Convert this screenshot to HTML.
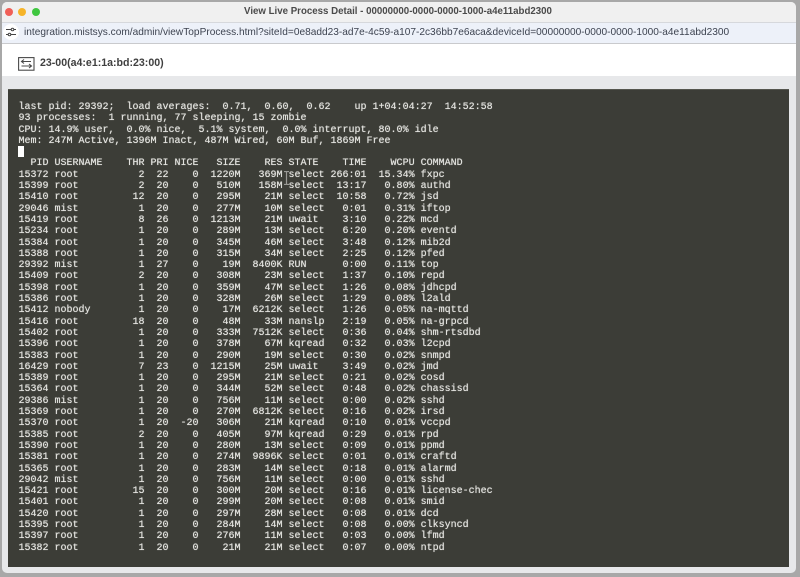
<!DOCTYPE html>
<html><head><meta charset="utf-8"><style>
html,body{margin:0;padding:0;width:800px;height:577px;overflow:hidden;background:#a8a8a8}
body{position:relative;font-family:"Liberation Sans",sans-serif}
.a{position:absolute}
#win{left:2px;top:2px;width:794px;height:571px;background:#e7e8ea;border-radius:5px;overflow:hidden}
#tb{left:2px;top:2px;width:794px;height:20px;background:#f0f0f0;border-radius:5px 5px 0 0}
#addr{left:2px;top:22px;width:794px;height:20px;background:#edf1f9;border-top:1px solid #d6d8dc;border-bottom:2px solid #c9cacd}
#wh{left:2px;top:44px;width:794px;height:32px;background:#fff}
.dot{width:8.4px;height:8.4px;border-radius:50%;top:7.8px}
#title{left:0;top:6px;width:796px;text-align:center;font-size:9.7px;line-height:12px;font-weight:bold;color:#4a4a4a;white-space:nowrap;filter:blur(.25px)}
#url{left:24px;top:26px;font-size:10.13px;line-height:14px;color:#3d4350;white-space:nowrap;filter:blur(.2px)}
#name{left:40px;top:56px;font-size:10.6px;line-height:14px;font-weight:bold;color:#3f3f3f;white-space:nowrap;filter:blur(.2px)}
#term{left:8px;top:89px;width:781px;height:478px;background:#3c3d37;border-top:1px solid #55564f;box-sizing:border-box}
pre{position:absolute;left:18.5px;top:102px;margin:0;font-family:"Liberation Mono",monospace;font-size:10px;line-height:11.3px;color:#e4e4e0;font-weight:normal;white-space:pre;text-shadow:0 0 .6px #e4e4e0;filter:blur(.25px)}
#cur{left:18px;top:146px;width:6px;height:11px;background:#fff}
</style></head><body>
<div class="a" id="win"></div>
<div class="a" id="tb"></div>
<div class="a dot" style="left:5px;background:#f05f57"></div>
<div class="a dot" style="left:18px;background:#f6b429"></div>
<div class="a dot" style="left:31.5px;background:#3fc63f"></div>
<div class="a" id="title">View Live Process Detail - 00000000-0000-0000-1000-a4e11abd2300</div>
<div class="a" id="addr"></div>
<div class="a" style="left:3px;top:24px;width:16px;height:16px;border-radius:50%;background:#fff"></div>
<svg class="a" style="left:6px;top:27px" width="10" height="10" viewBox="0 0 10 10" fill="none" stroke="#444" stroke-width="1"><path d="M0 2.5H5M8 2.5H10M0 7.5H2M5 7.5H10"/><circle cx="6.5" cy="2.5" r="1.3"/><circle cx="3.5" cy="7.5" r="1.3"/></svg>
<div class="a" id="url">integration.mistsys.com/admin/viewTopProcess.html?siteId=0e8add23-ad7e-4c59-a107-2c36bb7e6aca&amp;deviceId=00000000-0000-0000-1000-a4e11abd2300</div>
<div class="a" id="wh"></div>
<svg class="a" style="left:18px;top:57px" width="17" height="14" viewBox="0 0 17 14" fill="none" stroke="#4a4a4a" stroke-width="1.1"><rect x=".6" y=".6" width="15.4" height="12.6"/><path d="M13 4.5H4M6 2.5L3.5 4.5L6 6.5M3.5 9H13M11 7L13.5 9L11 11"/></svg>
<div class="a" id="name">23-00(a4:e1:1a:bd:23:00)</div>
<div class="a" id="term"></div>
<pre>last pid: 29392;  load averages:  0.71,  0.60,  0.62    up 1+04:04:27  14:52:58
93 processes:  1 running, 77 sleeping, 15 zombie
CPU: 14.9% user,  0.0% nice,  5.1% system,  0.0% interrupt, 80.0% idle
Mem: 247M Active, 1396M Inact, 487M Wired, 60M Buf, 1869M Free

  PID USERNAME    THR PRI NICE   SIZE    RES STATE    TIME    WCPU COMMAND
15372 root          2  22    0  1220M   369M select 266:01  15.34% fxpc
15399 root          2  20    0   510M   158M select  13:17   0.80% authd
15410 root         12  20    0   295M    21M select  10:58   0.72% jsd
29046 mist          1  20    0   277M    10M select   0:01   0.31% iftop
15419 root          8  26    0  1213M    21M uwait    3:10   0.22% mcd
15234 root          1  20    0   289M    13M select   6:20   0.20% eventd
15384 root          1  20    0   345M    46M select   3:48   0.12% mib2d
15388 root          1  20    0   315M    34M select   2:25   0.12% pfed
29392 mist          1  27    0    19M  8400K RUN      0:00   0.11% top
15409 root          2  20    0   308M    23M select   1:37   0.10% repd
15398 root          1  20    0   359M    47M select   1:26   0.08% jdhcpd
15386 root          1  20    0   328M    26M select   1:29   0.08% l2ald
15412 nobody        1  20    0    17M  6212K select   1:26   0.05% na-mqttd
15416 root         18  20    0    48M    33M nanslp   2:19   0.05% na-grpcd
15402 root          1  20    0   333M  7512K select   0:36   0.04% shm-rtsdbd
15396 root          1  20    0   378M    67M kqread   0:32   0.03% l2cpd
15383 root          1  20    0   290M    19M select   0:30   0.02% snmpd
16429 root          7  23    0  1215M    25M uwait    3:49   0.02% jmd
15389 root          1  20    0   295M    21M select   0:21   0.02% cosd
15364 root          1  20    0   344M    52M select   0:48   0.02% chassisd
29386 mist          1  20    0   756M    11M select   0:00   0.02% sshd
15369 root          1  20    0   270M  6812K select   0:16   0.02% irsd
15370 root          1  20  -20   306M    21M kqread   0:10   0.01% vccpd
15385 root          2  20    0   405M    97M kqread   0:29   0.01% rpd
15390 root          1  20    0   280M    13M select   0:09   0.01% ppmd
15381 root          1  20    0   274M  9896K select   0:01   0.01% craftd
15365 root          1  20    0   283M    14M select   0:18   0.01% alarmd
29042 mist          1  20    0   756M    11M select   0:00   0.01% sshd
15421 root         15  20    0   300M    20M select   0:16   0.01% license-chec
15401 root          1  20    0   299M    20M select   0:08   0.01% smid
15420 root          1  20    0   297M    28M select   0:08   0.01% dcd
15395 root          1  20    0   284M    14M select   0:08   0.00% clksyncd
15397 root          1  20    0   276M    11M select   0:03   0.00% lfmd
15382 root          1  20    0    21M    21M select   0:07   0.00% ntpd</pre>
<div class="a" id="cur"></div>
<svg class="a" style="left:282.5px;top:171px" width="7" height="14" viewBox="0 0 7 14" fill="none" stroke="#9a9a96" stroke-width="1.2"><path d="M1 .5H3L3.5 1L4 .5H6M3.5 1V13M1 13.5H3L3.5 13L4 13.5H6"/></svg>
</body></html>
